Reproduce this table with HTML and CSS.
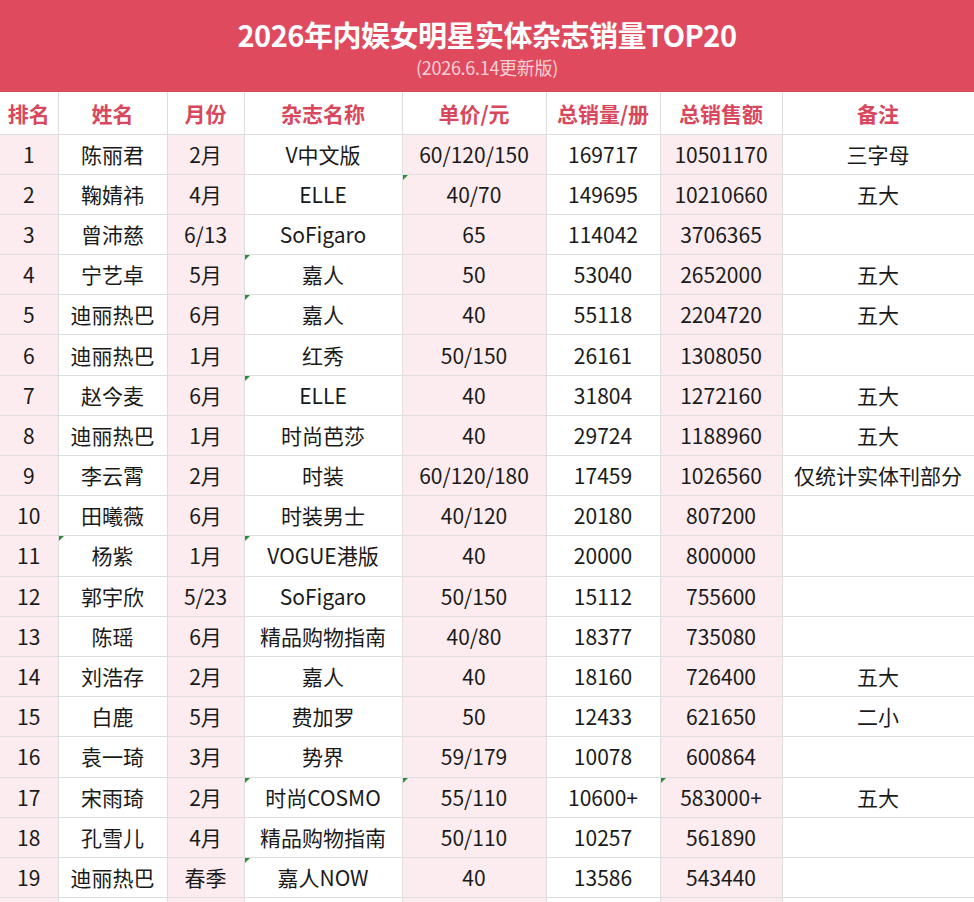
FILE: index.html
```html
<!DOCTYPE html>
<html lang="zh-CN">
<head>
<meta charset="utf-8">
<title>2026年内娱女明星实体杂志销量TOP20</title>
<link rel="stylesheet" href="styles.css">
</head>
<body>
<div class="banner">
  <h1 class="title">2026年内娱女明星实体杂志销量TOP20</h1>
  <div class="subtitle">(2026.6.14更新版)</div>
</div>
<table class="sheet">
  <colgroup>
    <col class="c1"><col class="c2"><col class="c3"><col class="c4"><col class="c5"><col class="c6"><col class="c7"><col class="c8">
  </colgroup>
  <thead>
    <tr><th>排名</th><th>姓名</th><th>月份</th><th>杂志名称</th><th>单价/元</th><th>总销量/册</th><th>总销售额</th><th>备注</th></tr>
  </thead>
  <tbody>
    <tr><td>1</td><td>陈丽君</td><td>2月</td><td>V中文版</td><td>60/120/150</td><td>169717</td><td>10501170</td><td>三字母</td></tr>
    <tr><td>2</td><td>鞠婧祎</td><td>4月</td><td>ELLE</td><td class="mark">40/70</td><td>149695</td><td>10210660</td><td>五大</td></tr>
    <tr><td>3</td><td>曾沛慈</td><td>6/13</td><td>SoFigaro</td><td>65</td><td>114042</td><td>3706365</td><td></td></tr>
    <tr><td>4</td><td>宁艺卓</td><td>5月</td><td class="mark">嘉人</td><td>50</td><td>53040</td><td>2652000</td><td>五大</td></tr>
    <tr><td>5</td><td>迪丽热巴</td><td>6月</td><td class="mark">嘉人</td><td>40</td><td>55118</td><td>2204720</td><td>五大</td></tr>
    <tr><td>6</td><td>迪丽热巴</td><td>1月</td><td>红秀</td><td>50/150</td><td>26161</td><td>1308050</td><td></td></tr>
    <tr><td>7</td><td>赵今麦</td><td>6月</td><td class="mark">ELLE</td><td>40</td><td>31804</td><td>1272160</td><td>五大</td></tr>
    <tr><td>8</td><td>迪丽热巴</td><td>1月</td><td>时尚芭莎</td><td>40</td><td>29724</td><td>1188960</td><td>五大</td></tr>
    <tr><td>9</td><td>李云霄</td><td>2月</td><td>时装</td><td>60/120/180</td><td>17459</td><td>1026560</td><td>仅统计实体刊部分</td></tr>
    <tr><td>10</td><td>田曦薇</td><td>6月</td><td>时装男士</td><td>40/120</td><td>20180</td><td>807200</td><td></td></tr>
    <tr><td>11</td><td class="mark">杨紫</td><td>1月</td><td class="mark">VOGUE港版</td><td>40</td><td>20000</td><td>800000</td><td></td></tr>
    <tr><td>12</td><td>郭宇欣</td><td>5/23</td><td>SoFigaro</td><td>50/150</td><td>15112</td><td>755600</td><td></td></tr>
    <tr><td>13</td><td>陈瑶</td><td>6月</td><td>精品购物指南</td><td>40/80</td><td>18377</td><td>735080</td><td></td></tr>
    <tr><td>14</td><td>刘浩存</td><td>2月</td><td>嘉人</td><td>40</td><td>18160</td><td>726400</td><td>五大</td></tr>
    <tr><td>15</td><td>白鹿</td><td>5月</td><td>费加罗</td><td>50</td><td>12433</td><td>621650</td><td>二小</td></tr>
    <tr><td>16</td><td>袁一琦</td><td>3月</td><td>势界</td><td>59/179</td><td>10078</td><td>600864</td><td></td></tr>
    <tr><td>17</td><td>宋雨琦</td><td>2月</td><td class="mark">时尚COSMO</td><td class="mark">55/110</td><td>10600+</td><td class="mark">583000+</td><td>五大</td></tr>
    <tr><td>18</td><td>孔雪儿</td><td>4月</td><td>精品购物指南</td><td>50/110</td><td>10257</td><td>561890</td><td></td></tr>
    <tr><td>19</td><td>迪丽热巴</td><td>春季</td><td class="mark">嘉人NOW</td><td>40</td><td>13586</td><td>543440</td><td></td></tr>
    <tr><td></td><td></td><td></td><td></td><td></td><td></td><td></td><td></td></tr>
  </tbody>
</table>
</body>
</html>
```
FILE: styles.css
```css
html, body {
  margin: 0;
  padding: 0;
  background: #ffffff;
}
body {
  width: 974px;
  overflow: hidden;
  font-family: "Noto Sans CJK SC", "Noto Sans", sans-serif;
  color: #1a1a1a;
}
.banner {
  background: #e04a5e;
  height: 92px;
  box-sizing: border-box;
  padding-top: 14px;
  text-align: center;
}
.title {
  margin: 0;
  font-size: 29px;
  line-height: 40px;
  font-weight: 700;
  color: #ffffff;
  letter-spacing: -0.5px;
}
.subtitle {
  margin-top: 0;
  font-size: 18px;
  line-height: 26px;
  color: #f8d0d5;
  letter-spacing: -0.3px;
}
.sheet {
  width: 974px;
  table-layout: fixed;
  border-collapse: collapse;
}
.c1 { width: 58px; }
.c2 { width: 109px; }
.c3 { width: 77px; }
.c4 { width: 158px; }
.c5 { width: 144px; }
.c6 { width: 114px; }
.c7 { width: 122px; }
.c8 { width: 192px; }
.sheet th, .sheet td {
  border: 1px solid #dedede;
  padding: 0;
  text-align: center;
  white-space: nowrap;
  overflow: hidden;
  box-sizing: border-box;
}
.sheet tr > *:first-child { border-left: none; }
.sheet thead th {
  border-top: none;
  height: 42px;
  font-size: 21px;
  font-weight: 700;
  color: #d9475c;
  background: #ffffff;
}
.sheet td {
  height: 40.2px;
  font-size: 21px;
  font-weight: 400;
  line-height: 1;
  position: relative;
}
.sheet tbody td:nth-child(1),
.sheet tbody td:nth-child(3),
.sheet tbody td:nth-child(5),
.sheet tbody td:nth-child(7) {
  background: #fcecef;
}
.sheet td.mark::before {
  content: "";
  position: absolute;
  left: 0;
  top: 0;
  width: 0;
  height: 0;
  border-top: 5px solid #2e8b3a;
  border-right: 5px solid transparent;
}
```
